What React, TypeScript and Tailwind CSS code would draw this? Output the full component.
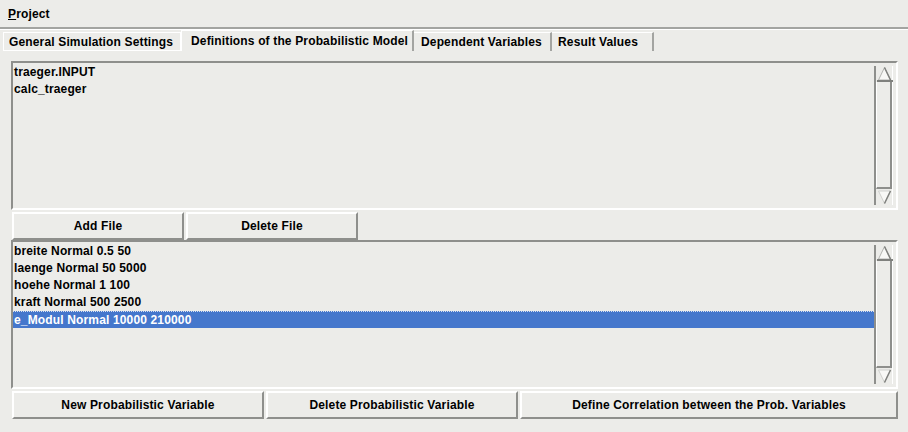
import React from "react";

const files = ["traeger.INPUT", "calc_traeger"];
const vars = [
  "breite Normal 0.5 50",
  "laenge Normal 50 5000",
  "hoehe Normal 1 100",
  "kraft Normal 500 2500",
  "e_Modul Normal 10000 210000",
];

function Scrollbar() {
  return (
    <div className="flex w-[19px] flex-col border-l-2 border-[#8e8f8c] border-r border-r-white my-[3px] mr-[3px]">
      <svg width="17" height="16" viewBox="0 0 17 16" className="shrink-0">
        <polygon points="8.5,1.5 2.5,14 14.5,14" fill="#f8f8f6" stroke="#b4b5b2" strokeWidth="1" />
        <line x1="8.5" y1="1.5" x2="14.5" y2="14" stroke="#7f807d" strokeWidth="1.5" />
        <line x1="1" y1="15" x2="17" y2="15" stroke="#7f807d" strokeWidth="2" />
      </svg>
      <div className="flex-1 border-r-2 border-b-2 border-[#8e8f8c] border-l border-l-white" />
      <svg width="17" height="16" viewBox="0 0 17 16" className="shrink-0">
        <polygon points="2.5,2 14.5,2 8.5,14.5" fill="#f8f8f6" stroke="#d0d1ce" strokeWidth="1" />
        <line x1="14.5" y1="2" x2="8.5" y2="14.5" stroke="#7f807d" strokeWidth="1.5" />
      </svg>
    </div>
  );
}

function Listbox({ items, selected, height }: { items: string[]; selected?: number; height: string }) {
  return (
    <div className={`flex ${height} border-t-2 border-l-2 border-[#8e8f8c] border-b-2 border-r-2 border-b-white border-r-white`}>
      <div className="flex-1 pt-[1px]">
        {items.map((t, i) => (
          <div
            key={t}
            className={
              i === selected
                ? "h-[17px] leading-[17px] bg-[#4577cc] text-white pl-[1px] border-t border-dotted border-[#d8e0f0]"
                : "h-[17px] leading-[17px] text-black pl-[1px]"
            }
          >
            {t}
          </div>
        ))}
      </div>
      <Scrollbar />
    </div>
  );
}

function Button({ label, width }: { label: string; width: string }) {
  return (
    <button
      className={`${width} h-[28px] border-t-2 border-l-2 border-white border-r-2 border-b-2 border-r-[#8e8f8c] border-b-[#8e8f8c] bg-[#ecece9] text-center text-black`}
    >
      {label}
    </button>
  );
}

export default function App() {
  return (
    <div
      className="w-[908px] h-[432px] bg-[#ecece9] text-[12px] font-bold tracking-[0.15px] text-black overflow-hidden"
      style={{ fontFamily: '"Liberation Sans", Arial, sans-serif' }}
    >
      <div className="h-[27px] flex items-center pl-[8px]">
        <span>
          <span className="underline">P</span>roject
        </span>
      </div>
      <div className="h-[2px] bg-[#a3a4a1]" />
      <div className="h-[1px] bg-white" />

      <div className="flex items-end h-[21px] pl-[3px]">
        <div className="w-[178px] h-[19px] flex items-center pl-[5px] border border-white">
          General Simulation Settings
        </div>
        <div className="w-[233px] h-[21px] flex items-center pl-[9px] border-t border-l border-white border-r-2 border-r-[#a3a4a1]">
          Definitions of the Probabilistic Model
        </div>
        <div className="w-[138px] h-[19px] flex items-center pl-[7px] border-t border-white border-r-2 border-r-[#a3a4a1]">
          Dependent Variables
        </div>
        <div className="w-[102px] h-[19px] flex items-center pl-[6px] border-t border-white border-r-2 border-r-[#a3a4a1]">
          Result Values
        </div>
      </div>

      <div className="pl-[11px] pr-[10px] pt-[10px]">
        <Listbox items={files} height="h-[149px]" />
        <div className="flex gap-[2px] pl-[1px] pt-[2px]">
          <Button label="Add File" width="w-[172px]" />
          <Button label="Delete File" width="w-[172px]" />
        </div>
        <Listbox items={vars} selected={4} height="h-[149px]" />
        <div className="flex gap-[2px] pl-[1px] pt-[2px]">
          <Button label="New Probabilistic Variable" width="w-[252px]" />
          <Button label="Delete Probabilistic Variable" width="w-[252px]" />
          <Button label="Define Correlation between the Prob. Variables" width="w-[378px]" />
        </div>
      </div>
    </div>
  );
}
